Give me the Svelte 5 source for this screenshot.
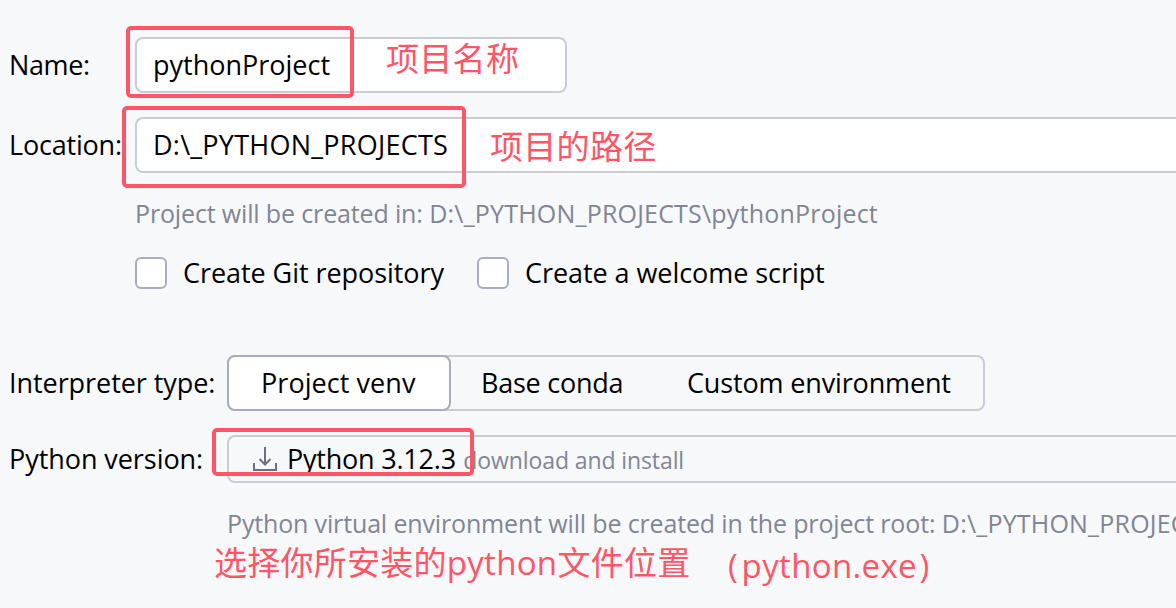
<script>
  const project = 'pythonProject';
  const folder = 'D:\\_PYTHON_PROJECTS';
</script>

<main class="dialog">
  <div class="row name-row">
    <label class="t-name" for="name">Name:</label>
    <div class="field name-field" id="name"><span class="t-project">{project}</span></div>
  </div>

  <div class="row location-row">
    <label class="t-location" for="location">Location:</label>
    <div class="field open-field" id="location"><span class="t-folder">{folder}</span></div>
  </div>

  <p class="hint created"><span class="lead">Project will be created in:</span><span class="path">{folder}\{project}</span></p>

  <div class="checks">
    <div class="check"><i class="box"></i><span class="t-git">Create Git repository</span></div>
    <div class="check"><i class="box"></i><span class="t-git">Create a welcome script</span></div>
  </div>

  <div class="row type-row">
    <span class="t-type">Interpreter type:</span>
    <div class="segments">
      <div class="segment selected"><span>Project venv</span></div>
      <div class="segment base"><span>Base conda</span></div>
      <div class="segment custom"><span>Custom environment</span></div>
    </div>
  </div>

  <div class="row version-row">
    <span class="t-type">Python version:</span>
    <div class="combo">
      <svg width="24" height="24" viewBox="0 0 24 24" fill="none" stroke="#6c707e" stroke-width="2">
        <path d="M12 0V17.5M6.5 12L12 17.5L17.5 12M1 16V23H23V16" />
      </svg>
      <span class="t-python">Python 3.12.3</span>
      <span class="t-download">download and install</span>
    </div>
  </div>

  <p class="hint venv"><span class="lead">Python virtual environment will be created in the project root:</span><span class="path">{folder}\{project}</span></p>

  <div class="mark mark-name"></div>
  <div class="mark mark-location"></div>
  <div class="mark mark-python"></div>
  <span class="note note-name">项目名称</span>
  <span class="note note-location">项目的路径</span>
  <span class="note note-pick">选择你所安装的<span class="latin">python</span>文件位置</span>
  <span class="note note-exe"><span class="open">(</span>python.exe<span class="close">)</span></span>
</main>

<style>
  :global(body) { background: #f7f8fa; }
  .dialog {
    position: relative;
    box-sizing: border-box;
    width: 1176px;
    height: 608px;
    padding-top: 37px;
    overflow: hidden;
    background: #f7f8fa;
    color: #000;
    font: 27px/36px "Open Sans", "Noto Sans", sans-serif;
    white-space: nowrap;
  }
  .row { display: grid; grid-template-columns: 126px 1fr; align-items: center; padding-left: 9px; }
  .location-row { margin-top: 24px; }
  .t-name { letter-spacing: -0.4px; }
  .t-location { letter-spacing: -0.2px; }
  .t-folder { letter-spacing: 0.24px; }
  .t-git, .t-type { letter-spacing: -0.06px; }
  .field {
    box-sizing: border-box;
    display: flex;
    align-items: center;
    height: 56px;
    padding-left: 16px;
    border: 2px solid #c9ccd6;
    border-radius: 8px;
    background: #fff;
  }
  .name-field { width: 432px; }
  .open-field { border-right: 0; border-radius: 8px 0 0 8px; }
  .hint { display: flex; gap: 6.5px; margin: 0; color: #818594; font-size: 25px; }
  .lead { letter-spacing: -0.15px; }
  .path { letter-spacing: 0.2px; }
  .created { margin: 22px 0 0 135px; }
  .checks { display: flex; gap: 32px; margin: 22px 0 0 135px; height: 40px; }
  .check { display: flex; align-items: center; gap: 16px; }
  .check:first-child { width: 310px; }
  .box { box-sizing: border-box; width: 32px; height: 32px; border: 2px solid #a8adbd; border-radius: 6px; background: #fff; }
  .type-row, .version-row { grid-template-columns: 218px 1fr; }
  .type-row { margin-top: 62px; }
  .segments {
    box-sizing: border-box;
    display: flex;
    width: 758px;
    height: 56px;
    border: 2px solid #c9ccd6;
    border-radius: 8px;
  }
  .segment { box-sizing: border-box; display: flex; align-items: center; }
  .selected { width: 224px; margin: -2px 0 -2px -2px; padding-left: 32px; border: 2px solid #a8adbd; border-radius: 8px; background: #fff; letter-spacing: 0.06px; }
  .base { width: 205px; padding-left: 30px; letter-spacing: -0.25px; }
  .custom { padding-left: 31px; letter-spacing: -0.15px; }
  .version-row { margin-top: 24px; }
  .combo {
    box-sizing: border-box;
    display: flex;
    align-items: center;
    height: 48px;
    padding-left: 24px;
    border: 2px solid #c9ccd6;
    border-right: 0;
    border-radius: 8px 0 0 8px;
  }
  .t-python { margin-left: 10px; letter-spacing: -0.22px; }
  .t-download { margin-left: 7.5px; padding-top: 2px; color: #818594; font-size: 23px; letter-spacing: -0.1px; }
  .venv { margin: 22px 0 0 227px; }
  .mark { position: absolute; box-sizing: border-box; border: 4px solid #ff5566; border-radius: 5px; }
  .mark-name { left: 126px; top: 26px; width: 228px; height: 72px; }
  .mark-location { left: 122px; top: 106px; width: 344px; height: 82px; }
  .mark-python { left: 212px; top: 428px; width: 262px; height: 48px; }
  .note { position: absolute; color: #ff5566; font: 33px/44px "Noto Sans CJK SC", sans-serif; letter-spacing: 0.3px; }
  .note-name { left: 386px; top: 35px; }
  .note-location { left: 490px; top: 123px; }
  .note-pick { left: 214px; top: 539px; letter-spacing: 0.25px; }
  .latin { font-family: "Open Sans", sans-serif; letter-spacing: 0.3px; }
  .note-exe { left: 728px; top: 544px; font-family: "Open Sans", sans-serif; letter-spacing: 0.35px; }
  .open { margin-right: 3.5px; }
  .close { margin-left: 2.5px; }
</style>
